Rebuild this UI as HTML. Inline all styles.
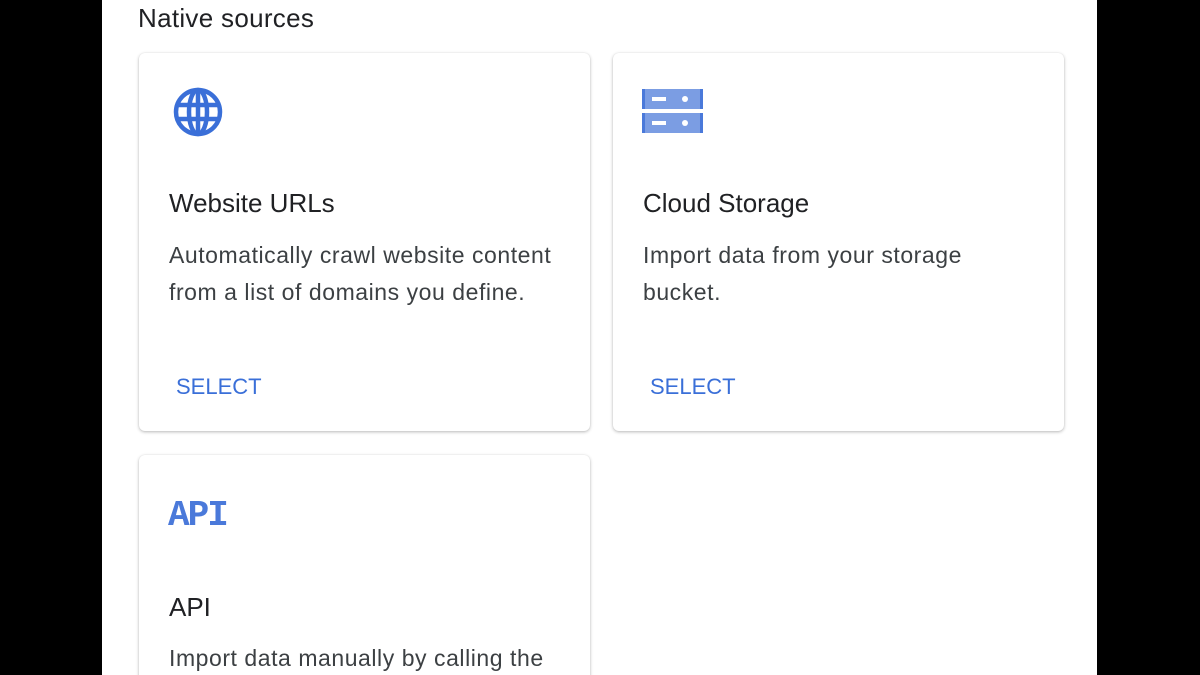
<!DOCTYPE html>
<html><head><style>
html,body{margin:0;width:1200px;height:675px;overflow:hidden}
body{background:#000;font-family:"Liberation Sans",Roboto,sans-serif;position:relative}
.panel{position:absolute;left:102px;top:0;width:995px;height:675px;background:#fff;overflow:hidden}
h1{position:absolute;left:138px;top:3px;margin:0;font-size:26px;font-weight:500;color:#202124;letter-spacing:0.3px}
.card{position:absolute;background:#fff;border-radius:6px;box-shadow:0 1px 3px rgba(0,0,0,0.28),0 0 1px rgba(0,0,0,0.08)}
.t{position:absolute;left:30px;font-size:26px;color:#202124}
.d{position:absolute;left:30px;font-size:23px;line-height:37px;color:#3c4043;width:430px;letter-spacing:0.55px;white-space:nowrap}
.s{position:absolute;left:37px;font-size:22px;color:#3a6fd8;font-weight:500;letter-spacing:0px}
</style></head><body>
<div class="panel">
<h1 style="left:36px">Native sources</h1>
<div class="card" style="left:37px;top:53px;width:451px;height:378px">
<svg style="position:absolute;left:33px;top:33px" width="52" height="52" viewBox="0 0 52 52" fill="none" stroke="#3a6fd8" stroke-width="4.5">
<circle cx="26" cy="26" r="22"/><ellipse cx="26" cy="26" rx="9" ry="22"/><line x1="4" y1="19" x2="48" y2="19"/><line x1="4" y1="33" x2="48" y2="33"/><line x1="26" y1="4" x2="26" y2="48"/></svg>
<div class="t" style="top:135px">Website URLs</div>
<div class="d" style="top:184px">Automatically crawl website content<br>from a list of domains you define.</div>
<div class="s" style="top:321px">SELECT</div>
</div>
<div class="card" style="left:511px;top:53px;width:451px;height:378px">
<svg style="position:absolute;left:29px;top:36px" width="61" height="45" viewBox="0 0 61 45">
<rect x="0" y="0" width="61" height="20" fill="#7b9de3"/><rect x="0" y="24" width="61" height="20" fill="#7b9de3"/>
<rect x="0" y="0" width="3" height="20" fill="#4a79da"/><rect x="58" y="0" width="3" height="20" fill="#4a79da"/>
<rect x="0" y="24" width="3" height="20" fill="#4a79da"/><rect x="58" y="24" width="3" height="20" fill="#4a79da"/>
<rect x="10" y="8" width="14" height="4" fill="#fff"/><circle cx="43" cy="10" r="3" fill="#fff"/>
<rect x="10" y="32" width="14" height="4" fill="#fff"/><circle cx="43" cy="34" r="3" fill="#fff"/></svg>
<div class="t" style="top:135px">Cloud Storage</div>
<div class="d" style="top:184px">Import data from your storage<br>bucket.</div>
<div class="s" style="top:321px">SELECT</div>
</div>
<div class="card" style="left:37px;top:455px;width:451px;height:230px">
<div style="position:absolute;left:29px;top:40px;font-family:'Liberation Mono',monospace;font-weight:bold;font-size:36px;color:#4a79da;letter-spacing:-2px">API</div>
<div class="t" style="top:137px">API</div>
<div class="d" style="top:185px">Import data manually by calling the</div>
</div>
</div>
</body></html>
